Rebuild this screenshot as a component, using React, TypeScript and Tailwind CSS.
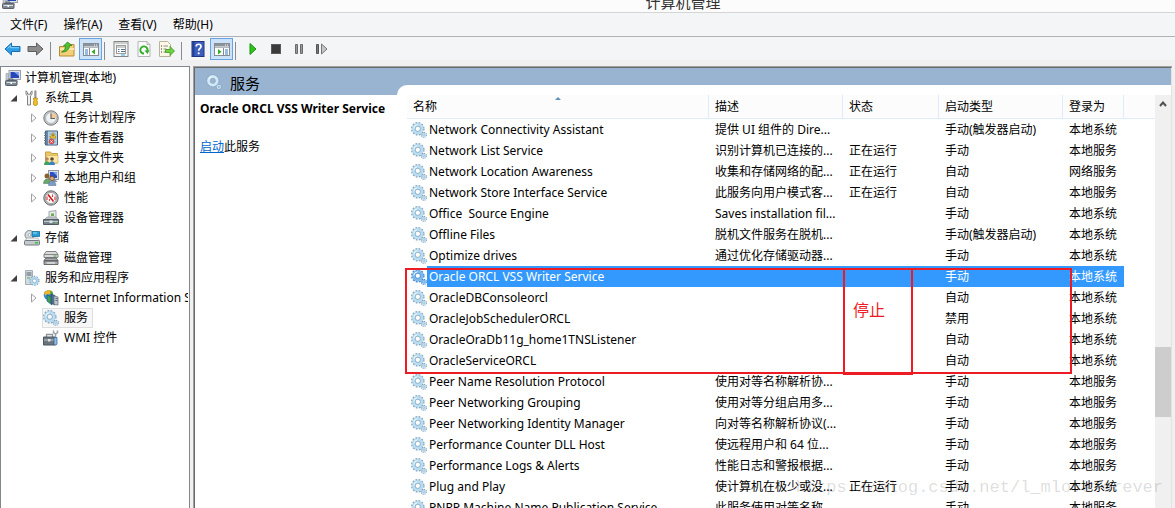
import type { ReactNode } from "react";
import clsx from "clsx";

type Service = {
  name: string;
  desc?: string;
  status?: string;
  startup: string;
  logon: string;
  selected?: boolean;
};

const services: Service[] = [
  { name: "Network Connectivity Assistant", desc: "提供 UI 组件的 Dire...", startup: "手动(触发器启动)", logon: "本地系统" },
  { name: "Network List Service", desc: "识别计算机已连接的...", status: "正在运行", startup: "手动", logon: "本地服务" },
  { name: "Network Location Awareness", desc: "收集和存储网络的配...", status: "正在运行", startup: "自动", logon: "网络服务" },
  { name: "Network Store Interface Service", desc: "此服务向用户模式客...", status: "正在运行", startup: "自动", logon: "本地服务" },
  { name: "Office  Source Engine", desc: "Saves installation fil...", startup: "手动", logon: "本地系统" },
  { name: "Offline Files", desc: "脱机文件服务在脱机...", startup: "手动(触发器启动)", logon: "本地系统" },
  { name: "Optimize drives", desc: "通过优化存储驱动器...", startup: "手动", logon: "本地系统" },
  { name: "Oracle ORCL VSS Writer Service", startup: "手动", logon: "本地系统", selected: true },
  { name: "OracleDBConsoleorcl", startup: "自动", logon: "本地系统" },
  { name: "OracleJobSchedulerORCL", startup: "禁用", logon: "本地系统" },
  { name: "OracleOraDb11g_home1TNSListener", startup: "自动", logon: "本地系统" },
  { name: "OracleServiceORCL", startup: "自动", logon: "本地系统" },
  { name: "Peer Name Resolution Protocol", desc: "使用对等名称解析协...", startup: "手动", logon: "本地服务" },
  { name: "Peer Networking Grouping", desc: "使用对等分组启用多...", startup: "手动", logon: "本地服务" },
  { name: "Peer Networking Identity Manager", desc: "向对等名称解析协议(...", startup: "手动", logon: "本地服务" },
  { name: "Performance Counter DLL Host", desc: "使远程用户和 64 位...", startup: "手动", logon: "本地服务" },
  { name: "Performance Logs & Alerts", desc: "性能日志和警报根据...", startup: "手动", logon: "本地服务" },
  { name: "Plug and Play", desc: "使计算机在极少或没...", status: "正在运行", startup: "手动", logon: "本地系统" },
  { name: "PNRP Machine Name Publication Service", desc: "此服务使用对等名称...", startup: "手动", logon: "本地服务" },
];

function Svg({ children, size = 16 }: { children: ReactNode; size?: number }) {
  return (
    <svg width={size} height={size} viewBox="0 0 16 16" fill="none" className="shrink-0" aria-hidden="true">
      {children}
    </svg>
  );
}

function GearIcon({ selected, faded }: { selected?: boolean; faded?: boolean }) {
  const edge = selected ? "#3d86c9" : faded ? "#86a8c4" : "#7fa3bd";
  const body = selected ? "#7db9ee" : faded ? "#d3e8f5" : "#b9dcf0";
  return (
    <Svg>
      <circle cx="6.8" cy="6.8" r="5.8" stroke={edge} strokeWidth="1.9" strokeDasharray="1.8 1.236" />
      <circle cx="6.8" cy="6.8" r="4.1" stroke={body} strokeWidth="3.2" />
      <circle cx="6.8" cy="6.8" r="2.6" stroke={edge} strokeWidth="0.8" />
      <path d="M2.800 6.500a4 4 0 0 1 3.700-3.700" stroke="#eef8fd" strokeWidth="1" />
      <circle cx="12.8" cy="12.8" r="2.5" stroke={edge} strokeWidth="1.300" strokeDasharray="1.1 0.863" />
      <circle cx="12.8" cy="12.8" r="1.500" stroke={body} strokeWidth="1.300" />
      <circle cx="12.8" cy="12.8" r="0.800" stroke={edge} strokeWidth="0.500" />
    </Svg>
  );
}

function ComputerIcon() {
  return (
    <Svg>
      <rect x="4" y="0.5" width="11.5" height="9" fill="#dfe3e8" stroke="#9aa1aa" />
      <rect x="5.5" y="2" width="8.5" height="6" fill="#2746b8" />
      <path d="M9 2h5v4z" fill="#86a3ee" />
      <path d="M7.5 10h5v2h-5z" fill="#9ba2aa" />
      <path d="M1 3.5h2.5V10H1z" fill="#c3c9cf" stroke="#8d949c" strokeWidth="0.6" />
      <rect x="0.5" y="10.5" width="11.5" height="5" rx="0.8" fill="#7e8994" stroke="#56616c" />
      <path d="M1.5 12.5h9.5" stroke="#d9dee3" />
      <path d="M4 10V9h4v1" stroke="#56616c" />
      <path d="M5.5 12h1.5v2H5.5z" fill="#fff" />
    </Svg>
  );
}

function ToolsIcon() {
  return (
    <Svg>
      <path d="M2 0.800v3.600L3.500 5.800V15h3V5.800L8 4.400V0.800L6.500 2.400v1.800h-3V2.400z" fill="#f1f1f1" stroke="#757575" strokeWidth="0.9" />
      <path d="M10.700 0.800h1.400v7h-1.400z" fill="#a5a5a5" stroke="#6f6f6f" strokeWidth="0.5" />
      <path d="M9.500 8h3.800v1.500l-.5 1 .5 1V14.500c0 1.300-3.800 1.300-3.800 0v-3l.5-1-.5-1z" fill="#f5c021" stroke="#a97c11" strokeWidth="0.7" />
    </Svg>
  );
}

function ClockIcon() {
  return (
    <Svg>
      <circle cx="8" cy="8" r="7.2" fill="#c9cacb" stroke="#747679" />
      <circle cx="8" cy="8" r="5.4" fill="#edf2f6" stroke="#9aa0a5" strokeWidth="0.6" />
      <path d="M8 2.700A5.300 5.300 0 0 1 13.300 8H8z" fill="#f7c892" />
      <path d="M8 3.500V8.500h4" stroke="#5b5f63" strokeWidth="1.100" />
    </Svg>
  );
}

function EventIcon() {
  return (
    <Svg>
      <path d="M2.500 1h12v14h-12z" fill="#5f8cb8" stroke="#45637f" />
      <path d="M5 1.500h9v13H5z" fill="#b7cfe3" />
      <path d="M6 4h7M6 6.500h7M6 9h7M6 12h7" stroke="#7f9ab2" strokeWidth="0.700" />
      <path d="M1 3h3M1 5.500h3M1 8h3M1 10.500h3M1 13h3" stroke="#777" strokeWidth="1" />
      <path d="M10 2.500l3 5.500H7z" fill="#ffd33a" stroke="#b58500" strokeWidth="0.700" />
      <path d="M10 4.500v2" stroke="#333" />
      <circle cx="8.500" cy="11.500" r="2.500" fill="#e05555" stroke="#a92d2d" strokeWidth="0.500" />
      <path d="M7.500 10.500l2 2M9.500 10.500l-2 2" stroke="#fff" strokeWidth="0.900" />
    </Svg>
  );
}

function SharedFolderIcon() {
  return (
    <Svg>
      <path d="M2.500 2h5l1 1.500h6v9.500h-12z" fill="#ecc865" stroke="#c4a04b" />
      <path d="M3.500 5.500h11.500v7.500H3.500z" fill="#fbe7a1" stroke="#d6b863" strokeWidth="0.800" />
      <circle cx="4" cy="9" r="1.800" fill="#ba8560" />
      <path d="M1 15c0-5 6-5 6 0z" fill="#3ea35c" />
      <circle cx="9" cy="9" r="1.800" fill="#5c4735" />
      <path d="M6 15c0-5 6-5 6 0z" fill="#3a82c4" />
    </Svg>
  );
}

function UsersIcon() {
  return (
    <Svg>
      <rect x="5.500" y="0.500" width="10" height="9" fill="#dce1e8" stroke="#8f98a5" />
      <rect x="7" y="2" width="7" height="6" fill="#2b50c4" />
      <path d="M10 2h4v4z" fill="#82a1ee" />
      <path d="M11 10h2l1.500 2H9z" fill="#909aa5" />
      <circle cx="4" cy="6" r="2.500" fill="#8a6037" />
      <path d="M0.500 13.500c0-6 7-6 7 0z" fill="#6ba56e" stroke="#477b4b" strokeWidth="0.500" />
      <circle cx="9" cy="8.500" r="2.300" fill="#d9a777" stroke="#5e4024" strokeWidth="0.800" />
      <path d="M5.500 15.500c0-6 7.500-6 7.500 0z" fill="#7c9cc0" stroke="#4b6a90" strokeWidth="0.500" />
    </Svg>
  );
}

function PerformanceIcon() {
  return (
    <Svg>
      <circle cx="8" cy="8" r="7.200" fill="#b9bbbd" stroke="#646669" />
      <circle cx="8" cy="8" r="5.500" fill="#fff" stroke="#88898b" strokeWidth="0.700" />
      <path d="M5 4.500l5.500 7" stroke="#d01818" strokeWidth="1.600" />
      <path d="M4 10V6.500M6.500 11V9M9.500 7V4.500M12 10V6.500" stroke="#d84545" strokeWidth="1.200" />
    </Svg>
  );
}

function DeviceIcon() {
  return (
    <Svg>
      <path d="M6 1.500l7-1v7H6z" fill="#e4e9ec" stroke="#8f979e" strokeWidth="0.800" />
      <path d="M8 6V3.500h3V6z" fill="#6ea94d" />
      <path d="M4 7h9l2.500 3H1z" fill="#c1c7cb" stroke="#868e94" strokeWidth="0.600" />
      <path d="M0.500 9.500h15v5h-15z" fill="#78848c" stroke="#505b63" />
      <path d="M1 11.500h14" stroke="#bec7cd" />
      <path d="M6.500 10.500h3v2.500h-3z" fill="#dde2e5" />
      <circle cx="13" cy="13" r="0.800" fill="#6adc55" />
    </Svg>
  );
}

function StorageIcon() {
  return (
    <Svg>
      <circle cx="5.500" cy="5" r="4.500" fill="#d8dddf" stroke="#7e868b" />
      <circle cx="5.500" cy="5" r="1.400" fill="#fff" stroke="#7e868b" strokeWidth="0.600" />
      <path d="M8 1.500h7.500v5H8z" fill="#249ed6" stroke="#146b97" strokeWidth="0.800" />
      <path d="M9 3h4" stroke="#a3e1fb" />
      <path d="M3 8h10.500l2 2.500H1z" fill="#f0f2f3" stroke="#8b9398" strokeWidth="0.600" />
      <rect x="0.500" y="10.500" width="15" height="4.500" rx="1" fill="#c3c9cd" stroke="#737b80" />
      <path d="M11 12h3v1.500h-3z" fill="#35c32f" />
    </Svg>
  );
}

function DiskIcon() {
  return (
    <Svg>
      <path d="M3 1.500h10l2 3v3H1v-3z" fill="#d8dadb" stroke="#77797b" strokeWidth="0.900" />
      <path d="M1 4.500h14" stroke="#888" />
      <path d="M10.500 6h3" stroke="#44a43c" />
      <path d="M3 8h10l2 2.500v4H1v-4z" fill="#a8abad" stroke="#5c5e60" strokeWidth="0.900" />
      <path d="M1 10.800h14" stroke="#55585a" strokeWidth="1.300" />
      <path d="M4 13h8" stroke="#e9e9e9" strokeWidth="1.200" />
    </Svg>
  );
}

function ServerGearIcon() {
  return (
    <Svg>
      <path d="M1.500 0.500h7v14h-7z" fill="#d3dbe0" stroke="#a5aeb4" />
      <path d="M2.500 3h5M2.500 5h5" stroke="#56616a" />
      <path d="M3 8h3" stroke="#4bb14a" />
      <circle cx="10.500" cy="10.800" r="4.300" stroke="#6f9dbd" strokeWidth="1.500" strokeDasharray="1.500 1.202" />
      <circle cx="10.500" cy="10.800" r="3" stroke="#b4d8ed" strokeWidth="2.200" fill="#fff" />
      <circle cx="10.500" cy="10.800" r="1.900" stroke="#7ea9c6" strokeWidth="0.700" />
    </Svg>
  );
}

function IisIcon() {
  return (
    <Svg>
      <circle cx="5.500" cy="5" r="4.800" fill="#348cd8" />
      <path d="M1 3c2-4 8-3 9-1L6 4.500 4 4 3 6z" fill="#f2b51f" />
      <path d="M7 1c2 0 3 2 3 4L8 6z" fill="#44a23c" />
      <path d="M4 5l5 2v8L4 11z" fill="#38a44b" stroke="#1e5f94" strokeWidth="0.800" />
      <path d="M8 4.500l4 1V15l-4-2z" fill="#4b6ea0" stroke="#2d3d55" strokeWidth="0.700" />
      <path d="M11 6l4 1v8l-4-.500z" fill="#bcc5cb" stroke="#6b757c" strokeWidth="0.800" />
      <path d="M12.500 8.500h2M12.500 10.500h2" stroke="#4a555d" strokeWidth="0.800" />
    </Svg>
  );
}

function WmiIcon() {
  return (
    <Svg>
      <path d="M3.500 7V4.500h6V7" stroke="#8b949b" strokeWidth="1.300" />
      <path d="M0.500 7h12v8H0.500z" fill="#6a757d" stroke="#4d575e" />
      <path d="M1 10h11" stroke="#bdc6cb" />
      <path d="M5 9h2.500v2.500H5z" fill="#e1e5e7" />
      <path d="M10.500 0.500v2l2 1.500 2-1.500v-2M12.500 4v3.500" stroke="#9ba2a7" strokeWidth="1.500" />
      <path d="M11 7.500h3v6.500c0 1.300-3 1.300-3 0z" fill="#8fbbe6" stroke="#2d5f96" strokeWidth="0.700" />
    </Svg>
  );
}

type Node = {
  label: string;
  level: 0 | 1 | 2;
  icon: ReactNode;
  arrow?: "open" | "closed";
  current?: boolean;
};

const tree: Node[] = [
  { label: "计算机管理(本地)", level: 0, icon: <ComputerIcon /> },
  { label: "系统工具", level: 1, icon: <ToolsIcon />, arrow: "open" },
  { label: "任务计划程序", level: 2, icon: <ClockIcon />, arrow: "closed" },
  { label: "事件查看器", level: 2, icon: <EventIcon />, arrow: "closed" },
  { label: "共享文件夹", level: 2, icon: <SharedFolderIcon />, arrow: "closed" },
  { label: "本地用户和组", level: 2, icon: <UsersIcon />, arrow: "closed" },
  { label: "性能", level: 2, icon: <PerformanceIcon />, arrow: "closed" },
  { label: "设备管理器", level: 2, icon: <DeviceIcon /> },
  { label: "存储", level: 1, icon: <StorageIcon />, arrow: "open" },
  { label: "磁盘管理", level: 2, icon: <DiskIcon /> },
  { label: "服务和应用程序", level: 1, icon: <ServerGearIcon />, arrow: "open" },
  { label: "Internet Information Services", level: 2, icon: <IisIcon />, arrow: "closed" },
  { label: "服务", level: 2, icon: <GearIcon />, current: true },
  { label: "WMI 控件", level: 2, icon: <WmiIcon /> },
];

function TreeRow({ node }: { node: Node }) {
  return (
    <li className={clsx("flex h-5 items-center", node.level === 1 && "pl-2", node.level === 2 && "pl-7")}>
      {node.level > 0 && (
        <svg width="8" height="10" viewBox="0 0 8 10" className="shrink-0" aria-hidden="true">
          {node.arrow === "open" && <path d="M8 2v6.500H1.500z" fill="#404040" />}
          {node.arrow === "closed" && <path d="M2.500 1v8L7 5z" fill="#fff" stroke="#a0a0a0" />}
        </svg>
      )}
      <button
        className={clsx(
          "flex h-5 items-center border pr-1 whitespace-nowrap",
          node.level === 0 ? "ml-[3px] gap-1" : "gap-[5px]",
          node.level === 1 && "ml-[6px]",
          node.level === 2 && "ml-[5px]",
          node.current ? "border-[#dedede] bg-[#f7f7f7]" : "border-transparent"
        )}
      >
        {node.icon}
        <span>{node.label}</span>
      </button>
    </li>
  );
}

function ToolButton({ label, children, active, wide }: { label: string; children: ReactNode; active?: boolean; wide?: boolean }) {
  return (
    <button
      aria-label={label}
      className={clsx(
        "flex h-[22px] shrink-0 items-center justify-center",
        wide ? "w-6" : "w-[23px]",
        active && "border border-[#66a3e0] bg-[#cbe2f8]"
      )}
    >
      {children}
    </button>
  );
}

function Separator() {
  return <div className="mx-[2px] h-[18px] w-px shrink-0 bg-[#8b8b8b]" />;
}

function ArrowIcon({ forward }: { forward?: boolean }) {
  return (
    <svg width="17" height="16" viewBox="0 0 17 16" aria-hidden="true">
      {forward ? (
        <path d="M16 8L9.500 2v3.500H1v5h8.500V14z" fill="#8c8c8c" stroke="#5e5e5e" />
      ) : (
        <>
          <path d="M1 8l6.500-6v3.500H16v5H7.500V14z" fill="#2e9fe6" stroke="#1b6fb4" />
          <path d="M3.500 7.500l3-3v2.200h8.500" stroke="#8bd0f8" fill="none" />
        </>
      )}
    </svg>
  );
}

function PaneIcon({ flip }: { flip?: boolean }) {
  return (
    <Svg>
      <rect x="0.500" y="2.500" width="15" height="12" fill="#fff" stroke="#858c93" />
      <path d="M1 3h14v2.500H1z" fill="#8b939b" />
      <path d="M11 4h1M13 4h1" stroke="#fff" />
      <path d="M1 6.500h14" stroke="#b5babe" />
      {flip ? (
        <>
          <path d="M9.500 7v7" stroke="#858c93" />
          <path d="M11 9h3M11 11h3M11 13h3" stroke="#337bc4" />
          <path d="M4 8v5.500l3.500-2.800z" fill="#31ad22" />
        </>
      ) : (
        <>
          <path d="M6.500 7v7" stroke="#858c93" />
          <path d="M2 9h3M2 11h3M2 13h3" stroke="#337bc4" />
          <path d="M12 8v5.500l-3.500-2.800z" fill="#31ad22" />
        </>
      )}
    </Svg>
  );
}

function Toolbar() {
  return (
    <div className="flex h-[23px] shrink-0 items-end bg-[#f4f5f7] pl-px">
      <ToolButton label="后退"><ArrowIcon /></ToolButton>
      <ToolButton label="前进"><ArrowIcon forward /></ToolButton>
      <div className="w-px" />
      <Separator />
      <div className="w-[2px]" />
      <ToolButton label="上移" wide>
        <Svg>
          <path d="M0.500 5.500h5l1.500-2h8V15H0.500z" fill="#f2cf78" stroke="#b68d33" />
          <path d="M1 7h14v2H1z" fill="#fbe6ac" />
          <path d="M2.500 11C5 10 6.500 8 6.500 5H4.500l4-4L13 4.500h-2.500C10.500 8.500 7 11.500 2.500 11z" fill="#4bc32f" stroke="#267c18" strokeWidth="0.700" />
        </Svg>
      </ToolButton>
      <ToolButton label="显示/隐藏控制台树" active><PaneIcon /></ToolButton>
      <Separator />
      <div className="w-[2px]" />
      <ToolButton label="属性">
        <Svg>
          <rect x="1" y="0.500" width="14" height="15" fill="#f6f6f6" stroke="#858585" />
          <path d="M1.500 2h13" stroke="#a5a5a5" />
          <rect x="3.500" y="4.500" width="9" height="8" fill="#fff" stroke="#9b9b9b" />
          <path d="M3.500 6h9" stroke="#9b9b9b" />
          <path d="M5 8.500h1.500M8 8.500h4M5 10.500h1.500M8 10.500h4" stroke="#526f8c" />
          <path d="M8 14h4" stroke="#39b1e2" />
        </Svg>
      </ToolButton>
      <ToolButton label="刷新">
        <Svg>
          <path d="M2 0.500h9l3 3v12H2z" fill="#fafafa" stroke="#b5b5b5" />
          <path d="M11 0.500v3h3" stroke="#b5b5b5" />
          <path d="M8 12.600a3.600 3.600 0 1 1 3.500-3.200" stroke="#2fac28" strokeWidth="1.900" />
          <path d="M13.500 9l-2 4-3-3.500z" fill="#2fac28" />
        </Svg>
      </ToolButton>
      <ToolButton label="导出列表">
        <Svg>
          <path d="M0.500 0.500h8l3 3v12H0.500z" fill="#fdf8e5" stroke="#b9b29d" />
          <path d="M2 5h1M2 8h1M2 11h1" stroke="#333" />
          <path d="M4.500 5H9M4.500 8h3M4.500 11h3" stroke="#8c8c8c" />
          <path d="M6.500 8.500H11V5.500l4.500 4.500-4.500 4.500v-3H6.500z" fill="#71d143" stroke="#3a9a22" strokeWidth="0.800" />
        </Svg>
      </ToolButton>
      <div className="w-px" />
      <Separator />
      <div className="w-[2px]" />
      <ToolButton label="帮助" wide>
        <Svg>
          <rect x="2" y="0.500" width="12" height="15" fill="#3c5fbd" stroke="#1e3580" />
          <path d="M2.500 1h2v14h-2z" fill="#253f96" />
          <path d="M6.200 5.500C6.200 2.500 11 2.500 11 5.500c0 2-2.300 2-2.300 4.300" stroke="#fff" strokeWidth="1.700" />
          <circle cx="8.700" cy="12.300" r="1.100" fill="#fff" />
        </Svg>
      </ToolButton>
      <ToolButton label="显示/隐藏操作窗格" active><PaneIcon flip /></ToolButton>
      <Separator />
      <div className="w-[3px]" />
      <ToolButton label="启动服务">
        <Svg><path d="M5 2.500v11L11 8z" fill="#2ec41d" stroke="#18920f" /></Svg>
      </ToolButton>
      <ToolButton label="停止服务">
        <Svg><rect x="3.500" y="3.500" width="9" height="9" fill="#3b3b3b" stroke="#5a5a5a" /></Svg>
      </ToolButton>
      <ToolButton label="暂停服务">
        <Svg><path d="M4.500 3.500h2v9h-2zM9.500 3.500h2v9h-2z" fill="#9a9a9a" stroke="#6a6a6a" /></Svg>
      </ToolButton>
      <ToolButton label="重新启动服务">
        <Svg>
          <path d="M2.500 3.500h2v9h-2z" fill="#777" stroke="#555" />
          <path d="M7.500 3v10L13 8z" fill="#c6c6c6" stroke="#777" />
        </Svg>
      </ToolButton>
    </div>
  );
}

const headCell = "relative h-6 border-r border-b border-[#e1ecfa] bg-[#fcfcfc] pl-[6px] text-left font-normal";
const cell = "h-[21px] overflow-hidden pl-[6px] whitespace-pre";

function ServiceTable() {
  return (
    <table className="w-full table-fixed border-separate border-spacing-0">
      <colgroup>
        <col className="w-[302px]" />
        <col className="w-[134px]" />
        <col className="w-[96px]" />
        <col className="w-[124px]" />
        <col className="w-[61px]" />
        <col />
      </colgroup>
      <thead>
        <tr>
          <th className={headCell}>
            名称
            <svg width="8" height="4" viewBox="0 0 8 4" className="absolute top-px left-[147px]" aria-hidden="true">
              <path d="M1 4l3-3 3 3z" fill="#5c93b5" />
            </svg>
          </th>
          <th className={headCell}>描述</th>
          <th className={headCell}>状态</th>
          <th className={headCell}>启动类型</th>
          <th className={headCell}>登录为</th>
          <th className="border-b border-[#e1ecfa] bg-[#fcfcfc]" />
        </tr>
      </thead>
      <tbody>
        {services.map((s) => {
          const blue = s.selected && "bg-[#3399ff] text-white";
          return (
            <tr key={s.name}>
              <td className="h-[21px] pl-1">
                <div className="flex h-[21px] items-center whitespace-pre">
                  <GearIcon selected={s.selected} />
                  <span className={clsx("flex h-full flex-1 items-center pl-[2px]", blue)}>{s.name}</span>
                </div>
              </td>
              <td className={clsx(cell, blue)}>{s.desc}</td>
              <td className={clsx(cell, blue)}>{s.status}</td>
              <td className={clsx(cell, blue)}>{s.startup}</td>
              <td className={clsx(cell, blue)}>{s.logon}</td>
              <td />
            </tr>
          );
        })}
      </tbody>
    </table>
  );
}

export default function App() {
  return (
    <div className="relative flex h-screen flex-col overflow-hidden bg-[#f0f0f0] font-['Noto_Sans','Noto_Sans_CJK_SC',sans-serif] text-[12px] leading-[18px] text-black">
      {/* title bar */}
      <header className="flex h-[13px] shrink-0 items-end overflow-hidden border-b border-[#d5d5d5] bg-[#fcfcfc] pl-[2px]">
        <div className="pb-[3px]"><ComputerIcon /></div>
        <h1 className="w-[1330px] shrink-0 text-center text-[15px] leading-5 text-[#333]">计算机管理</h1>
      </header>

      {/* menu */}
      <nav className="flex h-6 shrink-0 items-center gap-4 border-b border-[#aeb1b5] bg-[#f4f5f7] pl-[10px]">
        {["文件(F)", "操作(A)", "查看(V)", "帮助(H)"].map((item) => (
          <button key={item}>{item}</button>
        ))}
      </nav>

      <Toolbar />

      <main className="flex min-h-0 flex-1 gap-[3px] pt-[6px] pr-[3px]">
        {/* console tree */}
        <aside className="w-[190px] shrink-0 border border-b-0 border-[#828790] bg-white pt-px pr-px">
          <ul className="overflow-hidden">
            {tree.map((node) => (
              <TreeRow key={node.label} node={node} />
            ))}
          </ul>
        </aside>

        <div className="flex min-w-0 flex-1 border-t border-l border-[#a0a0a0] bg-white">
          <div className="flex min-w-0 flex-1 border-t border-r border-l border-[#696969] border-r-[#e3e3e3]">
            {/* selected service */}
            <section className="w-[202px] shrink-0">
              <div className="flex h-[27px] items-center gap-2 bg-[#99b4d1] pl-[11px]">
                <GearIcon faded />
                <h2 className="pt-[2px] text-[15px]">服务</h2>
              </div>
              <div className="pt-[5px] pl-[5px]">
                <p className="font-bold whitespace-nowrap">Oracle ORCL VSS Writer Service</p>
                <p className="pt-5">
                  <a href="#start" className="text-[#0066cc] underline">启动</a>此服务
                </p>
              </div>
            </section>

            {/* service list */}
            <section className="flex min-w-0 flex-1 flex-col bg-[#99b4d1] pt-[17px]">
              <div className="flex min-h-0 flex-1 rounded-tl-[10px] bg-white pt-[10px] pl-[10px]">
                <div className="relative min-w-0 flex-1">
                  <div className="h-full overflow-hidden">
                    <ServiceTable />
                  </div>
                  {/* red marker boxes over the Oracle rows */}
                  <div className="absolute top-[173px] left-[-2px] h-[106px] w-[667px] border-2 border-[#ed1c24]" />
                  <div className="absolute top-[173px] left-[436px] h-[107px] w-[70px] border-2 border-[#ed1c24] pt-7 pl-2 text-[16px] leading-6 text-[#ed1c24]">
                    停止
                  </div>
                </div>
                <div className="flex w-4 shrink-0 flex-col items-center bg-[#f0f0f0]">
                  <svg width="8" height="6" viewBox="0 0 8 6" className="mt-[6px] shrink-0" aria-hidden="true">
                    <path d="M1 5l3-3.500L7 5" fill="none" stroke="#505050" strokeWidth="2" />
                  </svg>
                  <div className="mt-60 h-[70px] w-full shrink-0 bg-[#cdcdcd]" />
                </div>
              </div>
            </section>
          </div>
        </div>
      </main>

      <div className="pointer-events-none absolute right-3 bottom-2 font-['Liberation_Mono',monospace] text-[17px] leading-6 text-black/15">
        https://blog.csdn.net/l_mloveforever
      </div>
    </div>
  );
}
